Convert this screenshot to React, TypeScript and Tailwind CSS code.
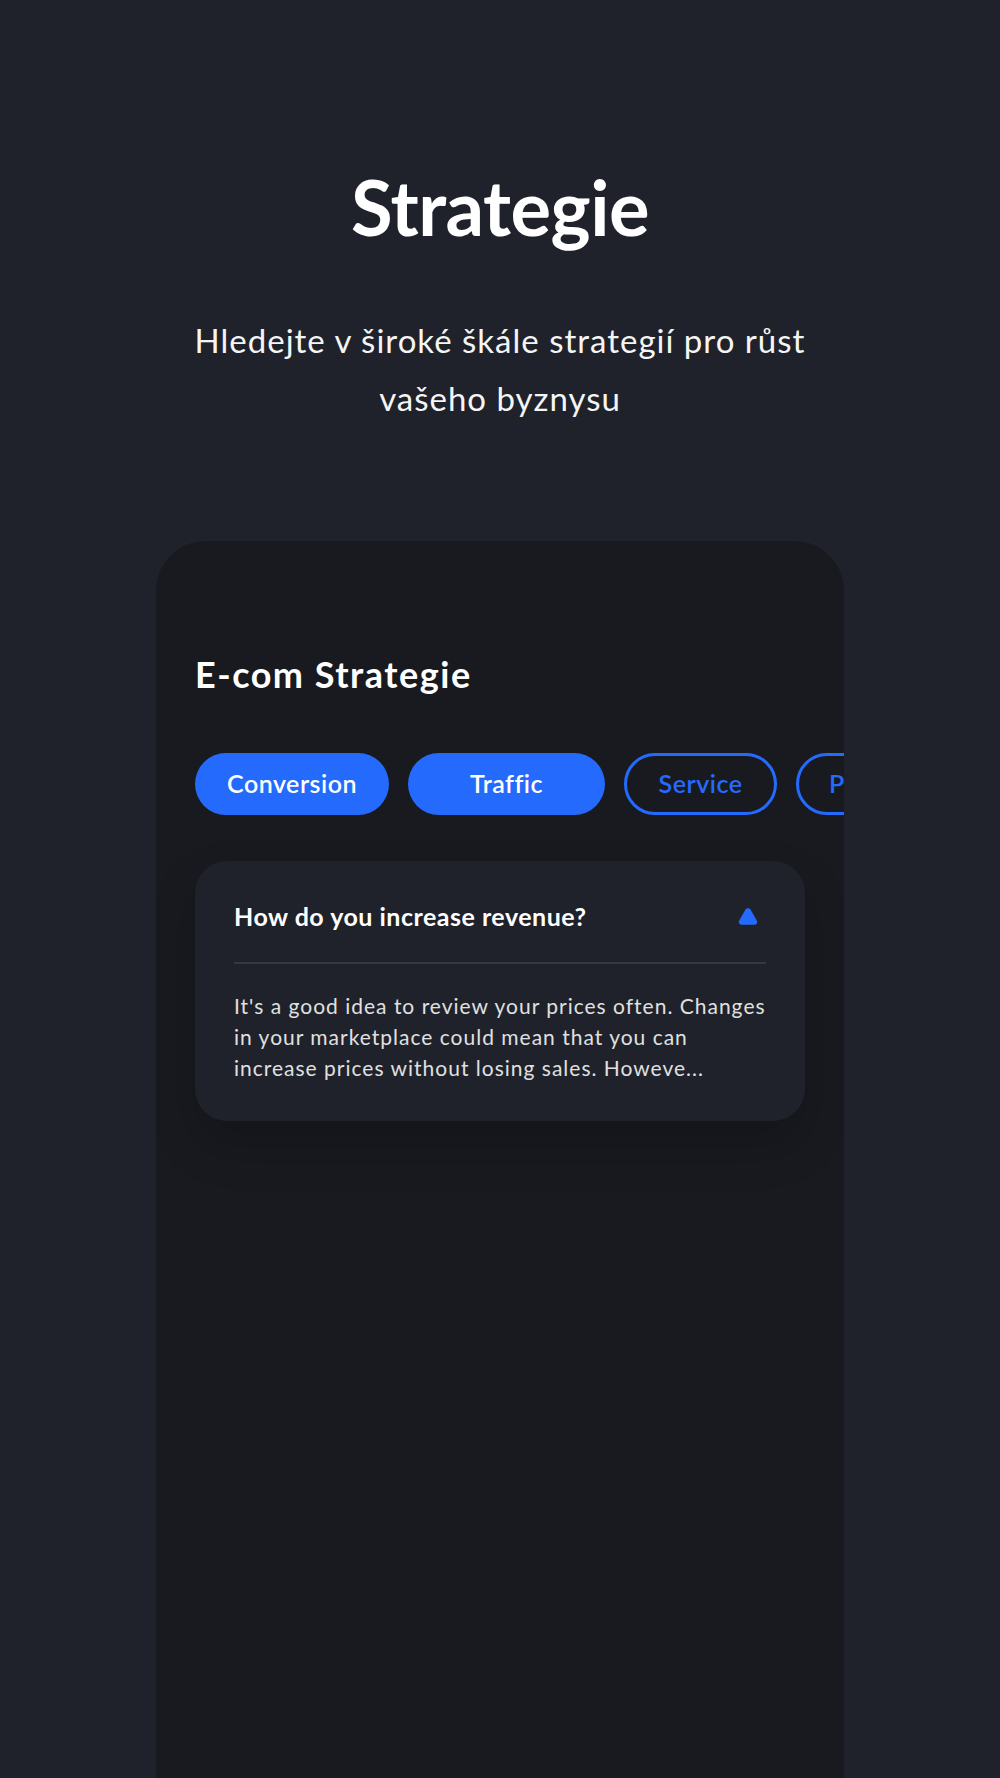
import React from "react";

const tabs = [
  { label: "Conversion", active: true, width: "w-[194px] justify-center" },
  { label: "Traffic", active: true, width: "w-[197px] justify-center" },
  { label: "Service", active: false, width: "w-[153px] justify-center" },
  { label: "Performance", active: false, width: "w-[210px] justify-start pl-[30px]" },
];

const TriangleUp = () => (
  <svg width="20" height="18" viewBox="0 0 20 18" fill="none">
    <path
      d="M7.5 1.6c1.1-1.9 3.9-1.9 5 0l6.4 11.1c1 1.8-.3 4.1-2.5 4.1H3.6c-2.2 0-3.5-2.3-2.5-4.1L7.5 1.6z"
      fill="#246BFD"
    />
  </svg>
);

const App = () => {
  return (
    <div className="h-[1778px] w-full overflow-hidden bg-[#1F222A] font-['Lato',sans-serif] text-white">
      {/* Header */}
      <div className="flex flex-col items-center pt-[169px] text-center">
        <h1 className="text-[76px] font-bold leading-none tracking-[-0.5px]">Strategie</h1>
        <p className="mt-[66px] w-[660px] text-[33px] leading-[58px] tracking-[1px] text-[#f5f5f5]">
          Hledejte v široké škále strategií pro růst vašeho byznysu
        </p>
      </div>

      {/* Strategy card */}
      <div className="mx-auto mt-[114px] h-[1300px] w-[688px] overflow-hidden rounded-[50px] bg-[#181A20] pt-[112px]">
        <h2 className="px-[39px] text-[36px] font-bold leading-[42px] tracking-[1.5px]">E-com Strategie</h2>

        <div className="mt-[58px] flex gap-[19px] pl-[39px]">
          {tabs.map((tab) => (
            <button
              key={tab.label}
              className={
                tab.active
                  ? `${tab.width} flex h-[62px] shrink-0 items-center rounded-full bg-[#246BFD] text-[25px] font-semibold tracking-[0.5px] text-white`
                  : `${tab.width} flex h-[62px] shrink-0 items-center rounded-full border-[3px] border-[#246BFD] text-[25px] font-semibold tracking-[0.5px] text-[#246BFD]`
              }
            >
              {tab.label}
            </button>
          ))}
        </div>

        {/* Accordion item */}
        <div className="mx-[39px] mt-[46px] rounded-[32px] bg-[#1F222A] px-[39px] pb-[38px] pt-[41px] shadow-[0_24px_48px_rgba(0,0,0,0.18)]">
          <div className="flex items-center justify-between">
            <h3 className="text-[25px] font-bold leading-[29px] tracking-[0.5px]">How do you increase revenue?</h3>
            <div className="mr-[8px]">
              <TriangleUp />
            </div>
          </div>
          <div className="mt-[31px] h-[2px] bg-[#35383F]" />
          <p className="mt-[26px] whitespace-nowrap text-[21px] leading-[31px] tracking-[1px] text-[#E0E0E0]">
            It's a good idea to review your prices often. Changes
            <br />
            in your marketplace could mean that you can
            <br />
            increase prices without losing sales. Howeve...
          </p>
        </div>
      </div>
    </div>
  );
};

export default App;
